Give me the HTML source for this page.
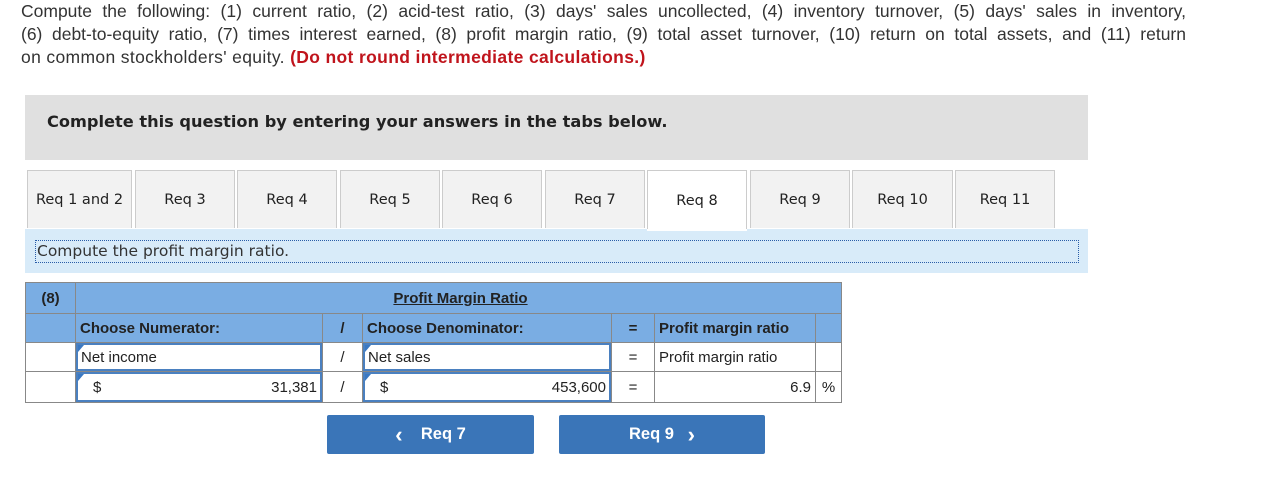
<!DOCTYPE html>
<html><head><style>
body{margin:0;width:1285px;height:497px;background:#fff;font-family:"Liberation Sans",Arial,sans-serif;position:relative;overflow:hidden;color:#222}
.a{position:absolute}
.ln{position:absolute;left:21px;font-size:17.5px;line-height:23px;color:#333;white-space:nowrap}
.j{width:1165px;text-align:justify;text-align-last:justify;white-space:normal}
.tab{position:absolute;top:170px;height:58px;background:#f2f2f2;border:1px solid #ccc;border-bottom:none;font-family:"DejaVu Sans",sans-serif;font-size:14.5px;display:flex;align-items:center;justify-content:center;box-sizing:border-box;color:#222}
.c{position:absolute;box-sizing:border-box;border:1px solid #888;font-size:15px;display:flex;align-items:center;padding:0 4px}
.h{background:#7aade3;font-weight:bold}
.w{background:#fff}
.inp{position:absolute;box-sizing:border-box;border:2px solid #4a80c0;background:#fff;font-size:15px;display:flex;align-items:center;padding:0 3px}
.inp:before{content:"";position:absolute;left:0;top:0;border-top:7px solid #3a78c2;border-right:6px solid transparent}
.btn{position:absolute;top:415px;height:39px;background:#3a75b8;border-radius:2px;color:#fff;font-weight:bold;font-size:16.5px;display:flex;align-items:center;justify-content:center}
.btn span{font-size:22px;font-weight:bold;line-height:1}
</style></head><body>
<div class="ln j" style="top:0px">Compute the following: (1) current ratio, (2) acid-test ratio, (3) days' sales uncollected, (4) inventory turnover, (5) days' sales in inventory,</div>
<div class="ln j" style="top:23px">(6) debt-to-equity ratio, (7) times interest earned, (8) profit margin ratio, (9) total asset turnover, (10) return on total assets, and (11) return</div>
<div class="ln" style="top:46px;letter-spacing:0.35px">on common stockholders' equity. <b style="color:#c0141c">(Do not round intermediate calculations.)</b></div>
<div class="a" style="left:25px;top:95px;width:1063px;height:65px;background:#e0e0e0"></div>
<div class="a" style="left:47px;top:112px;font-family:'DejaVu Sans',sans-serif;font-weight:bold;font-size:16.2px;color:#222">Complete this question by entering your answers in the tabs below.</div>
<div class="tab" style="left:27px;width:105px">Req 1 and 2</div>
<div class="tab" style="left:135px;width:100px">Req 3</div>
<div class="tab" style="left:237px;width:100px">Req 4</div>
<div class="tab" style="left:340px;width:100px">Req 5</div>
<div class="tab" style="left:442px;width:100px">Req 6</div>
<div class="tab" style="left:545px;width:100px">Req 7</div>
<div class="tab" style="left:647px;width:100px;background:#fff;height:60px">Req 8</div>
<div class="tab" style="left:750px;width:100px">Req 9</div>
<div class="tab" style="left:852px;width:101px">Req 10</div>
<div class="tab" style="left:955px;width:100px">Req 11</div>
<div class="a" style="left:25px;top:229px;width:1063px;height:44px;background:#d8ebf9"></div>
<div class="a" style="left:647px;top:229px;width:100px;height:2px;background:#fff"></div>
<div class="a" style="left:35px;top:240px;width:1041px;height:21px;border:1px dotted #2a5da8;font-family:'DejaVu Sans',sans-serif;font-size:15.5px;line-height:21px;color:#333;padding-left:1px">Compute the profit margin ratio.</div>

<div class="c h" style="left:25px;top:282px;width:51px;height:32px;justify-content:center">(8)</div>
<div class="c h" style="left:75px;top:282px;width:767px;height:32px;justify-content:center;padding-right:0"><u>Profit Margin Ratio</u></div>
<div class="c h" style="left:25px;top:313px;width:51px;height:30px"></div>
<div class="c h" style="left:75px;top:313px;width:248px;height:30px">Choose Numerator:</div>
<div class="c h" style="left:322px;top:313px;width:41px;height:30px;justify-content:center">/</div>
<div class="c h" style="left:362px;top:313px;width:250px;height:30px">Choose Denominator:</div>
<div class="c h" style="left:611px;top:313px;width:44px;height:30px;justify-content:center">=</div>
<div class="c h" style="left:654px;top:313px;width:162px;height:30px">Profit margin ratio</div>
<div class="c h" style="left:815px;top:313px;width:27px;height:30px"></div>

<div class="c w" style="left:25px;top:342px;width:51px;height:30px"></div>
<div class="c w" style="left:75px;top:342px;width:248px;height:30px"></div>
<div class="inp" style="left:76px;top:343px;width:246px;height:28px">Net income</div>
<div class="c w" style="left:322px;top:342px;width:41px;height:30px;justify-content:center">/</div>
<div class="c w" style="left:362px;top:342px;width:250px;height:30px"></div>
<div class="inp" style="left:363px;top:343px;width:248px;height:28px">Net sales</div>
<div class="c w" style="left:611px;top:342px;width:44px;height:30px;justify-content:center">=</div>
<div class="c w" style="left:654px;top:342px;width:162px;height:30px">Profit margin ratio</div>
<div class="c w" style="left:815px;top:342px;width:27px;height:30px"></div>

<div class="c w" style="left:25px;top:371px;width:51px;height:32px"></div>
<div class="c w" style="left:75px;top:371px;width:248px;height:32px"></div>
<div class="inp" style="left:76px;top:372px;width:246px;height:30px;justify-content:space-between;padding-left:15px">$<span>31,381</span></div>
<div class="c w" style="left:322px;top:371px;width:41px;height:32px;justify-content:center">/</div>
<div class="c w" style="left:362px;top:371px;width:250px;height:32px"></div>
<div class="inp" style="left:363px;top:372px;width:248px;height:30px;justify-content:space-between;padding-left:15px">$<span>453,600</span></div>
<div class="c w" style="left:611px;top:371px;width:44px;height:32px;justify-content:center">=</div>
<div class="c w" style="left:654px;top:371px;width:162px;height:32px;justify-content:flex-end">6.9</div>
<div class="c w" style="left:815px;top:371px;width:27px;height:32px;justify-content:center">%</div>

<div class="btn" style="left:327px;width:207px"><span>&#8249;</span>&nbsp;&nbsp;&nbsp; Req 7</div>
<div class="btn" style="left:559px;width:206px">Req 9 &nbsp;&nbsp;<span>&#8250;</span></div>
</body></html>
